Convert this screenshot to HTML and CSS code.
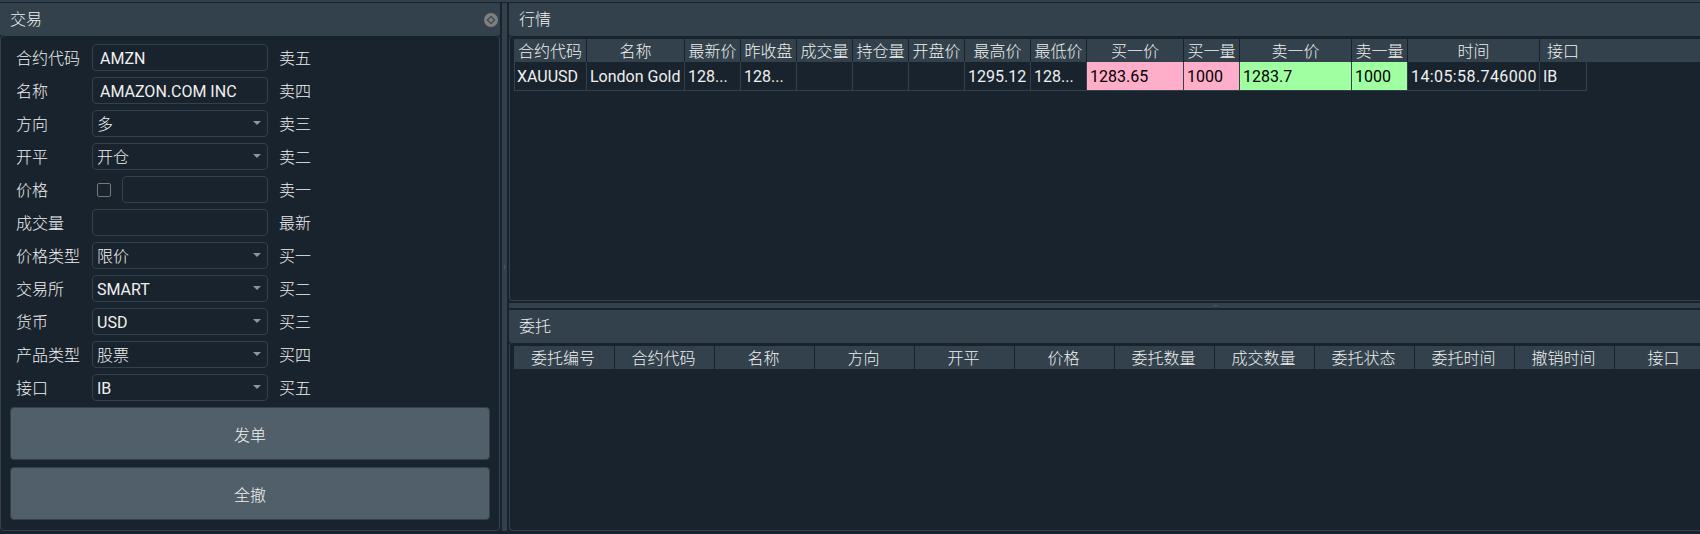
FILE: index.html
```html
<!DOCTYPE html>
<html lang="zh">
<head>
<meta charset="utf-8">
<title>交易</title>
<link rel="stylesheet" href="styles.css">
</head>
<body>
<div class="topband"></div>
<main class="workspace">
  <section class="dock trade">
    <header class="dock-title">
      <span>交易</span>
      <svg class="close" width="14" height="14" viewBox="0 0 14 14"><circle cx="7" cy="7" r="7" fill="#808080"/><path d="M7 3.4 10.6 7 7 10.6 3.4 7Z" fill="none" stroke="#3f4b55" stroke-width="1.4"/></svg>
    </header>
    <div class="dock-body trade-body">
      <div class="form">
        <div class="lbl">合约代码</div><div class="field text">AMZN</div><div class="book">卖五</div>
        <div class="lbl">名称</div><div class="field text">AMAZON.COM INC</div><div class="book">卖四</div>
        <div class="lbl">方向</div><div class="field select cjk">多</div><div class="book">卖三</div>
        <div class="lbl">开平</div><div class="field select cjk">开仓</div><div class="book">卖二</div>
        <div class="lbl">价格</div><div class="price-cell"><span class="check"></span><div class="field text grow"></div></div><div class="book">卖一</div>
        <div class="lbl">成交量</div><div class="field text"></div><div class="book">最新</div>
        <div class="lbl">价格类型</div><div class="field select cjk">限价</div><div class="book">买一</div>
        <div class="lbl">交易所</div><div class="field select">SMART</div><div class="book">买二</div>
        <div class="lbl">货币</div><div class="field select">USD</div><div class="book">买三</div>
        <div class="lbl">产品类型</div><div class="field select cjk">股票</div><div class="book">买四</div>
        <div class="lbl">接口</div><div class="field select">IB</div><div class="book">买五</div>
      </div>
      <button class="btn">发单</button>
      <button class="btn">全撤</button>
    </div>
  </section>
  <div class="vsplit"><i></i></div>
  <div class="right">
    <section class="dock market">
      <header class="dock-title"><span>行情</span></header>
      <div class="dock-body table-body">
        <div class="grid tick-head">
          <div>合约代码</div><div>名称</div><div>最新价</div><div>昨收盘</div><div>成交量</div><div>持仓量</div><div>开盘价</div><div>最高价</div><div>最低价</div><div>买一价</div><div>买一量</div><div>卖一价</div><div>卖一量</div><div>时间</div><div>接口</div>
        </div>
        <div class="grid tick-row">
          <div>XAUUSD</div><div>London Gold</div><div>128...</div><div>128...</div><div></div><div></div><div></div><div>1295.12</div><div>128...</div><div class="bid">1283.65</div><div class="bid">1000</div><div class="ask">1283.7</div><div class="ask">1000</div><div class="time">14:05:58.746000</div><div>IB</div>
        </div>
      </div>
    </section>
    <div class="hsplit"><i></i></div>
    <section class="dock orders">
      <header class="dock-title"><span>委托</span></header>
      <div class="dock-body table-body">
        <div class="grid order-head">
          <div>委托编号</div><div>合约代码</div><div>名称</div><div>方向</div><div>开平</div><div>价格</div><div>委托数量</div><div>成交数量</div><div>委托状态</div><div>委托时间</div><div>撤销时间</div><div>接口</div>
        </div>
      </div>
    </section>
  </div>
</main>
</body>
</html>
```
FILE: styles.css
```css
* { box-sizing: border-box; }
html, body { margin: 0; height: 534px; overflow: hidden; background: #19232D; }
body {
  font: 16px/1 Roboto, "Noto Sans CJK SC", sans-serif;
  color: #F0F0F0;
  display: flex;
  flex-direction: column;
}
.topband { height: 2px; background: #32414B; margin-bottom: 1px; flex: none; }
.workspace { display: flex; height: 528px; flex: none; }
.dock { display: flex; flex-direction: column; min-width: 0; }
.trade { width: 500px; flex: none; }
.dock-title {
  height: 32px; flex: none; background: #32414B;
  display: flex; align-items: center; justify-content: space-between;
  padding: 2px 2px 0 10px;
  font-weight: 300;
}
.dock-body {
  flex: 1; min-height: 0;
  border: 1px solid #32414B;
  border-radius: 4px;
}
.trade-body { padding: 8px 9px 0; display: flex; flex-direction: column; }
.form {
  display: grid;
  grid-template-columns: 76px 176px 1fr;
  grid-auto-rows: 27px;
  row-gap: 6px;
  padding-left: 6px;
  align-items: center;
}
.lbl, .book { padding-top: 2px; font-weight: 300; }
.book { padding-left: 11px; }
.cjk { font-weight: 300; }
.field {
  height: 27px;
  padding-top: 2px;
  border: 1px solid #32414B;
  border-radius: 4px;
  display: flex; align-items: center;
}
.field.text { padding-left: 7px; }
.field.select { padding-left: 4px; position: relative; }
.field.select::after {
  content: ""; position: absolute; right: 6px; top: 10px;
  border: 4px solid transparent; border-top: 4px solid #949494; border-bottom: 0;
}
.price-cell { display: flex; align-items: center; }
.check {
  width: 14px; height: 14px; flex: none; margin: 0 11px 0 5px;
  border: 1px solid #787878; border-radius: 2px;
}
.grow { flex: 1; }
.btn {
  height: 53px; width: 480px; flex: none; margin-top: 6px; padding: 4px 0 0;
  background: #505F69; color: #F0F0F0;
  border: 1px solid #32414B; border-radius: 4px;
  font: inherit; font-weight: 300;
}
.btn + .btn { margin-top: 7px; }
.vsplit { width: 9px; flex: none; position: relative; }
.vsplit::before { content: ""; position: absolute; top: 0; bottom: 0; left: 2px; width: 5px; background: #32414B; }
.vsplit i, .hsplit i { display: block; background: #46555f; }
.vsplit i { position: absolute; left: 4px; top: 262px; width: 1px; height: 4px; }
.right { flex: 1; min-width: 0; display: flex; flex-direction: column; }
.market { height: 298px; flex: none; }
.orders { flex: 1; min-height: 0; }
.right .dock-body { border-right: 0; border-radius: 4px 0 0 4px; }
.hsplit { height: 9px; flex: none; padding: 2px 0; position: relative; }
.hsplit::before { content: ""; display: block; height: 5px; background: #32414B; }
.hsplit i { position: absolute; left: 704px; top: 4px; width: 5px; height: 1px; }
.table-body { padding: 3px 0 0 4px; overflow: hidden; }
.grid { display: grid; }
.tick-head {
  grid-template-columns: 73px 98px 56px 56px 56px 56px 56px 66px 56px 97px 56px 112px 56px 132px 46px;
  height: 23px; background: #32414B; font-weight: 300;
}
.tick-row {
  grid-template-columns: 72px 98px 56px 56px 56px 56px 56px 66px 56px 97px 56px 112px 56px 132px 47px;
  width: max-content;
}
.tick-head > div, .order-head > div {
  display: flex; align-items: center; justify-content: center;
  padding-top: 2px; white-space: nowrap; overflow: hidden;
  border-right: 1px solid #19232D;
}
.order-head > div { padding-right: 2px; }
.tick-head > div:last-child { border-right: 0; }
.tick-row { height: 29px; border-left: 1px solid #32414B; }
.tick-row > div {
  display: flex; align-items: center;
  padding: 2px 0 0 3px; white-space: nowrap; overflow: hidden;
  border-right: 1px solid #32414B; border-bottom: 1px solid #32414B;
}
.tick-row > div:first-child { padding-left: 2px; }
.tick-row > .time { letter-spacing: .4px; padding-left: 3px; }
.bid { background: rgb(255,174,201); color: #000; }
.ask { background: rgb(160,255,160); color: #000; }
.order-head {
  grid-template-columns: 101px repeat(11, 100px);
  height: 23px; background: #32414B; font-weight: 300;
  width: 1211px;
}
```
